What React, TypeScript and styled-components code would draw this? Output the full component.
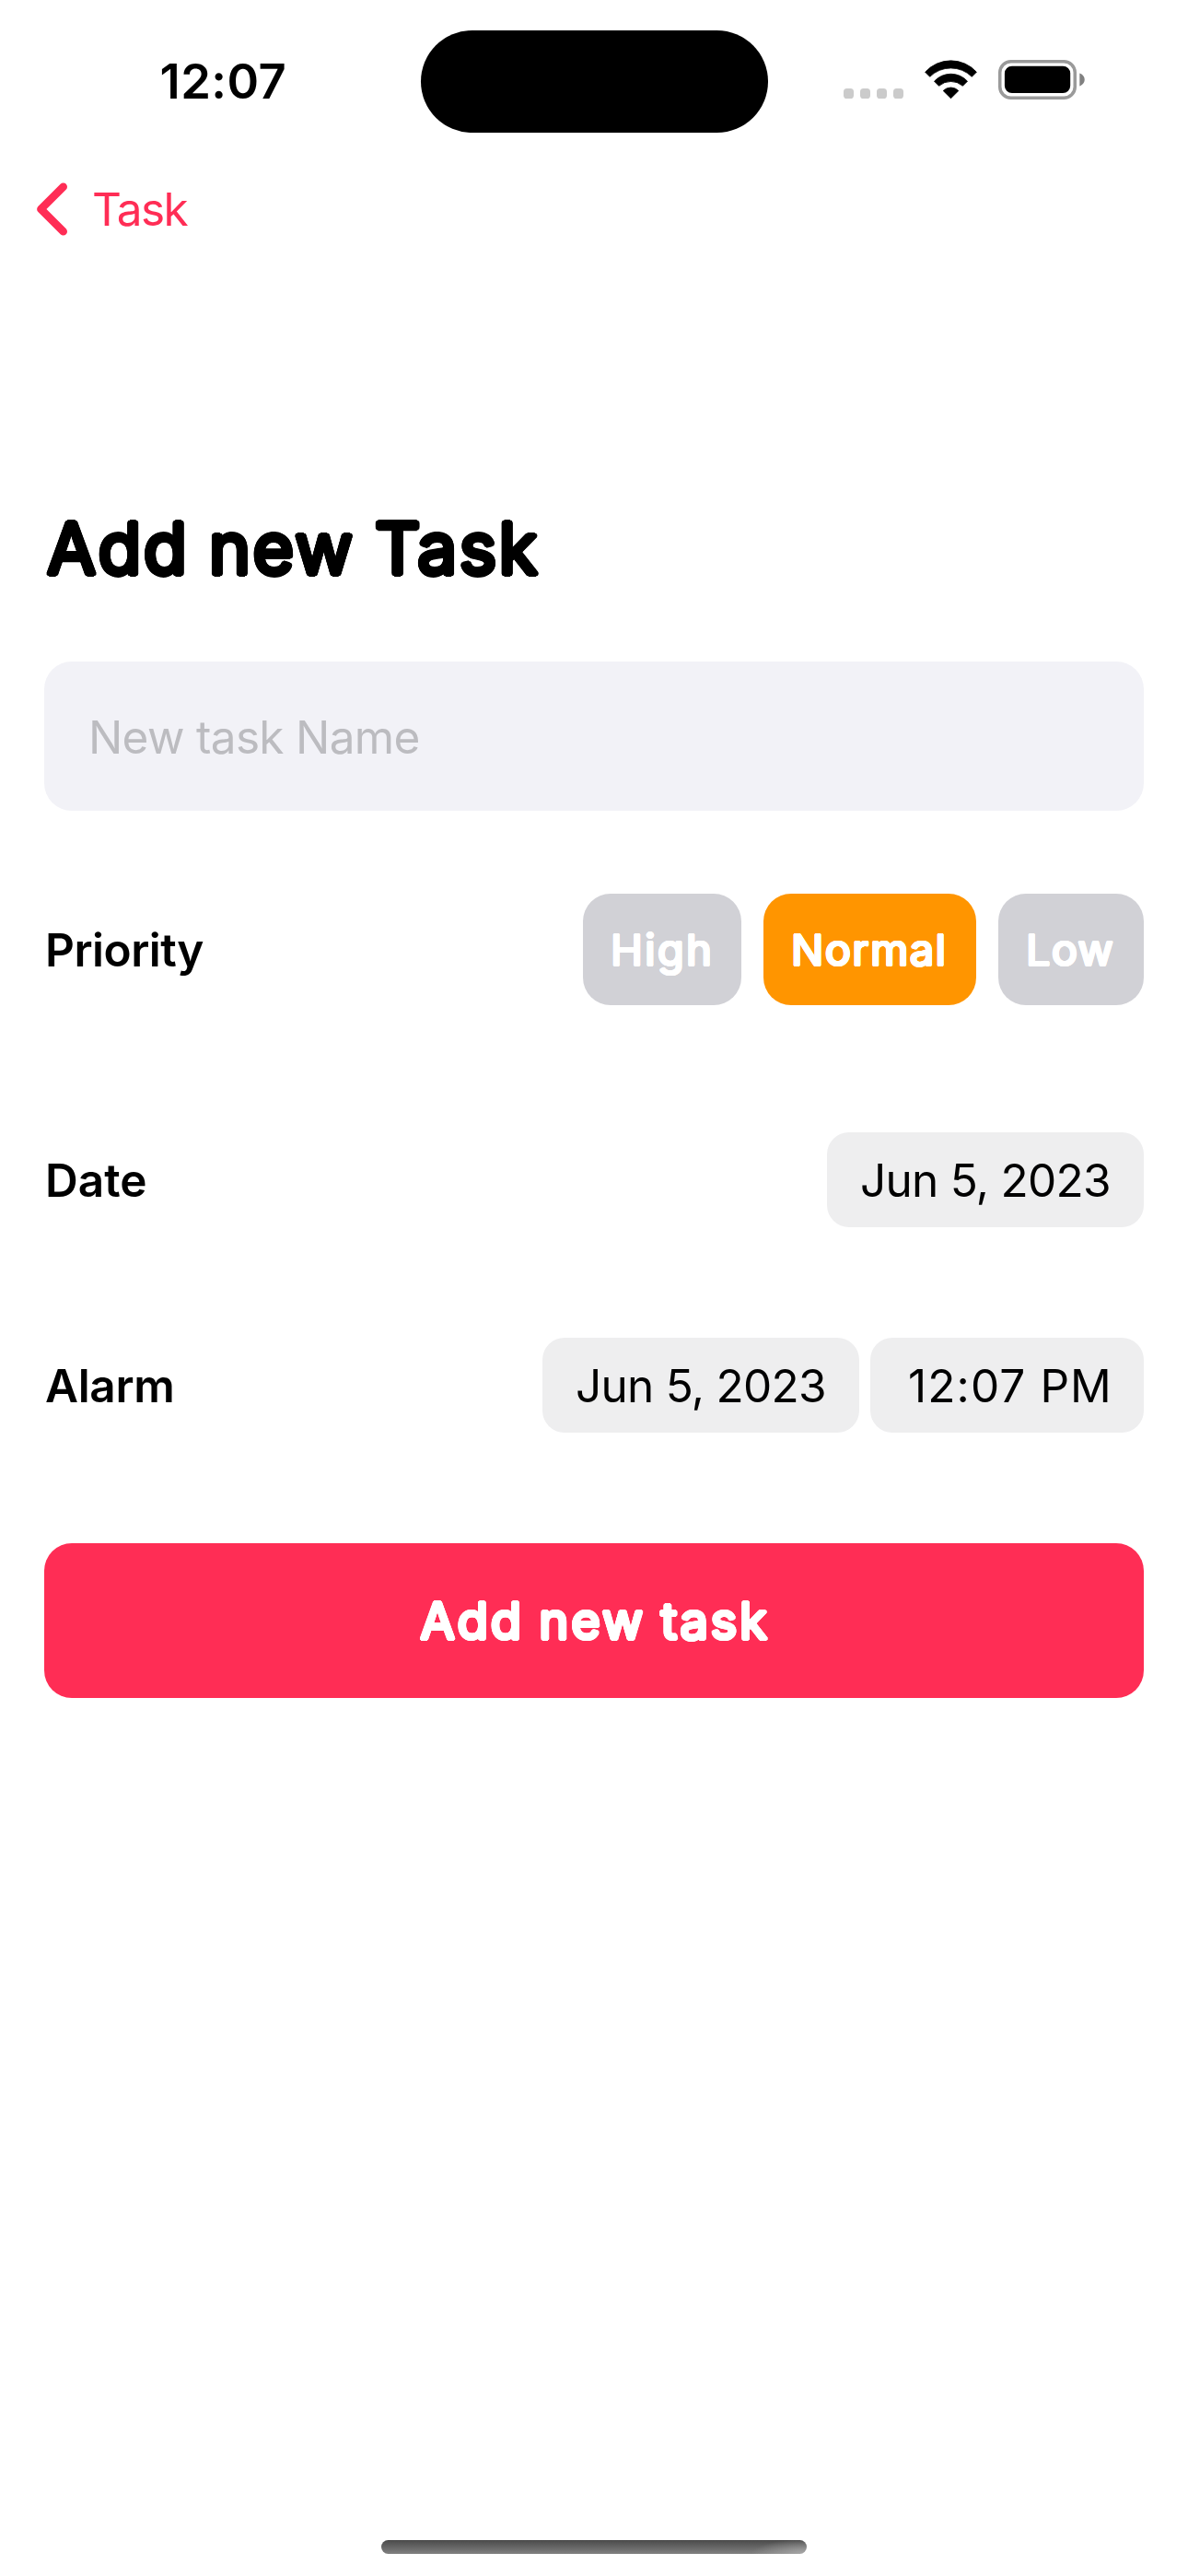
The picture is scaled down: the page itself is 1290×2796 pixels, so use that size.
import React, { useState } from "react";
import styled, { createGlobalStyle, css } from "styled-components";

const GlobalStyle = createGlobalStyle`
  * {
    box-sizing: border-box;
  }
  body {
    margin: 0;
    background: #ffffff;
    font-family: Inter, "Liberation Sans", sans-serif;
  }
`;

/* Thickens a light face with a disc-shaped outline so its stroke ends look round. */
const ring = (radius: number, steps: number) =>
  Array.from({ length: steps }, (_, i) => {
    const a = (i / steps) * Math.PI * 2;
    return `${(Math.cos(a) * radius).toFixed(2)}px ${(Math.sin(a) * radius).toFixed(2)}px 0 currentColor`;
  });

const rounded = (radius: number) => css`
  text-shadow: ${ring(radius, 16).join(", ")};
`;

const Screen = styled.div`
  display: flex;
  flex-direction: column;
  width: 1290px;
  height: 2796px;
  background: #ffffff;
  color: #000000;
`;

const StatusBar = styled.header`
  display: grid;
  grid-template-columns: 456.5px 377px 1fr;
  height: 176px;
`;

const Clock = styled.div`
  padding-left: 173.5px;
  font-size: 52.5px;
  font-weight: 600;
  line-height: 176px;
  letter-spacing: 0.45px;
`;

const Island = styled.div`
  height: 111px;
  margin-top: 33px;
  border-radius: 56px;
  background: #000000;
`;

const Indicators = styled.div`
  display: flex;
  gap: 23px;
  padding: 64px 0 0 82.5px;

  svg {
    display: block;
    flex: none;
  }
`;

const NavBar = styled.nav`
  display: flex;
  align-items: center;
  height: 102px;
  padding-left: 38px;
`;

const BackButton = styled.button`
  display: flex;
  align-items: center;
  gap: 25px;
  padding: 0;
  border: 0;
  background: none;
  color: #ff2d55;
  font: 400 49.5px/60px Inter, "Liberation Sans", sans-serif;
  letter-spacing: -1.6px;

  svg {
    display: block;
  }
`;

const Form = styled.main`
  display: flex;
  flex-direction: column;
  flex: 1;
  padding: 267px 48px 0;
`;

const Title = styled.h1`
  margin: 0 0 73px;
  padding-left: 3px;
  font-size: 77px;
  font-weight: 400;
  line-height: 100px;
  letter-spacing: 2.25px;
  word-spacing: -2.5px;
  ${rounded(2.6)}
`;

const NameField = styled.div`
  height: 162px;
  margin-bottom: 90px;
  padding: 1px 48px 0;
  border-radius: 30px;
  background: #f2f2f7;
  color: #bcbcc0;
  font-size: 49.5px;
  line-height: 162px;
  letter-spacing: -0.67px;
`;

const Row = styled.div<{ $height: number; $after: number }>`
  display: flex;
  align-items: center;
  justify-content: space-between;
  height: ${(p) => p.$height}px;
  margin-bottom: ${(p) => p.$after}px;
`;

const Label = styled.div<{ $spacing: number }>`
  padding-left: 1px;
  font-size: 49.5px;
  font-weight: 600;
  line-height: 60px;
  letter-spacing: ${(p) => p.$spacing}px;
`;

const Group = styled.div<{ $gap: number }>`
  display: flex;
  gap: ${(p) => p.$gap}px;
`;

const Chip = styled.button<{ $active: boolean; $width: number; $spacing: number }>`
  width: ${(p) => p.$width}px;
  height: 121px;
  padding: 1px 0 0 30px;
  border: 0;
  border-radius: 30px;
  background: ${(p) => (p.$active ? "#ff9500" : "#d1d1d6")};
  color: #ffffff;
  font: 400 47px/120px Inter, "Liberation Sans", sans-serif;
  letter-spacing: ${(p) => p.$spacing}px;
  text-align: left;
  white-space: nowrap;
  ${rounded(1.2)}
`;

const PickerPill = styled.div<{ $width: number; $inset: number; $spacing: number }>`
  width: ${(p) => p.$width}px;
  height: 103px;
  padding: 1px 0 0 ${(p) => p.$inset}px;
  border-radius: 24px;
  background: #eeeeef;
  font-size: 49.5px;
  line-height: 103px;
  letter-spacing: ${(p) => p.$spacing}px;
  white-space: nowrap;
`;

const SubmitButton = styled.button`
  height: 168px;
  padding: 0 0 0 2px;
  border: 0;
  border-radius: 30px;
  background: #ff2d55;
  color: #ffffff;
  font: 400 54.5px/168px Inter, "Liberation Sans", sans-serif;
  letter-spacing: 2.7px;
  word-spacing: -1.5px;
  ${rounded(1.9)}
`;

const HomeIndicator = styled.div`
  align-self: center;
  width: 462px;
  height: 15px;
  margin-bottom: 24px;
  border-radius: 8px;
  background:
    radial-gradient(60px 16px at 100% 100%, rgba(180, 180, 180, 0.8), rgba(180, 180, 180, 0)),
    linear-gradient(#4a4a4a, #808080);
`;

const SignalDots = () => (
  <svg width="65" height="44" viewBox="0 0 65 44" fill="#cbcbcb">
    {[0, 18, 36, 54].map((x) => (
      <rect key={x} x={x} y="32" width="11" height="11" rx="3.6" />
    ))}
  </svg>
);

const WifiIcon = () => (
  <svg width="57" height="44" viewBox="0 0 57 44" fill="#000" stroke="#000" strokeWidth="0.8" strokeLinejoin="round">
    <path d="M0.6 14.2A37.7 37.7 0 0 1 56.4 14.2L51.3 19.3A32.4 32.4 0 0 0 5.7 19.3Z" />
    <path d="M10.5 24.2A24.3 24.3 0 0 1 46.5 24.2L41.4 29.3A19.6 19.6 0 0 0 15.6 29.3Z" />
    <path d="M20.2 34.5A11.5 11.5 0 0 1 36.8 34.5L28.5 42.8Z" />
  </svg>
);

const BatteryIcon = () => (
  <svg width="94" height="44" viewBox="0 0 94 44">
    <rect x="1.75" y="2.75" width="81.5" height="39.5" rx="12" fill="none" stroke="#9a9a9a" strokeWidth="3.5" />
    <rect x="6.9" y="7.7" width="71.3" height="29.3" rx="8" />
    <path d="M88.3 15.6C91.4 16.6 93.7 19.3 93.7 22.5S91.4 28.4 88.3 29.4Z" fill="#808080" />
  </svg>
);

const ChevronLeft = () => (
  <svg width="37" height="60" viewBox="0 0 37 60" fill="none" stroke="currentColor" strokeWidth="8.6" strokeLinecap="round" strokeLinejoin="round">
    <path d="M30.7 5.7L6.4 30L30.7 54.3" />
  </svg>
);

const priorities = [
  { name: "High", width: 172, spacing: 2.3 },
  { name: "Normal", width: 231, spacing: 1.4 },
  { name: "Low", width: 158, spacing: 1.2 },
];

export default function App() {
  const [priority, setPriority] = useState("Normal");

  return (
    <>
      <GlobalStyle />
      <Screen>
        <StatusBar>
          <Clock>12:07</Clock>
          <Island />
          <Indicators>
            <SignalDots />
            <WifiIcon />
            <BatteryIcon />
          </Indicators>
        </StatusBar>
        <NavBar>
          <BackButton>
            <ChevronLeft />
            Task
          </BackButton>
        </NavBar>
        <Form>
          <Title>Add new Task</Title>
          <NameField>New task Name</NameField>
          <Row $height={121} $after={138}>
            <Label $spacing={-0.5}>Priority</Label>
            <Group $gap={24}>
              {priorities.map((p) => (
                <Chip
                  key={p.name}
                  $active={p.name === priority}
                  $width={p.width}
                  $spacing={p.spacing}
                  onClick={() => setPriority(p.name)}
                >
                  {p.name}
                </Chip>
              ))}
            </Group>
          </Row>
          <Row $height={103} $after={120}>
            <Label $spacing={0}>Date</Label>
            <PickerPill $width={344} $inset={36} $spacing={-0.72}>Jun 5, 2023</PickerPill>
          </Row>
          <Row $height={103} $after={120}>
            <Label $spacing={-0.3}>Alarm</Label>
            <Group $gap={12}>
              <PickerPill $width={344} $inset={36} $spacing={-0.72}>Jun 5, 2023</PickerPill>
              <PickerPill $width={297} $inset={41} $spacing={1.1}>12:07 PM</PickerPill>
            </Group>
          </Row>
          <SubmitButton>Add new task</SubmitButton>
        </Form>
        <HomeIndicator />
      </Screen>
    </>
  );
}
